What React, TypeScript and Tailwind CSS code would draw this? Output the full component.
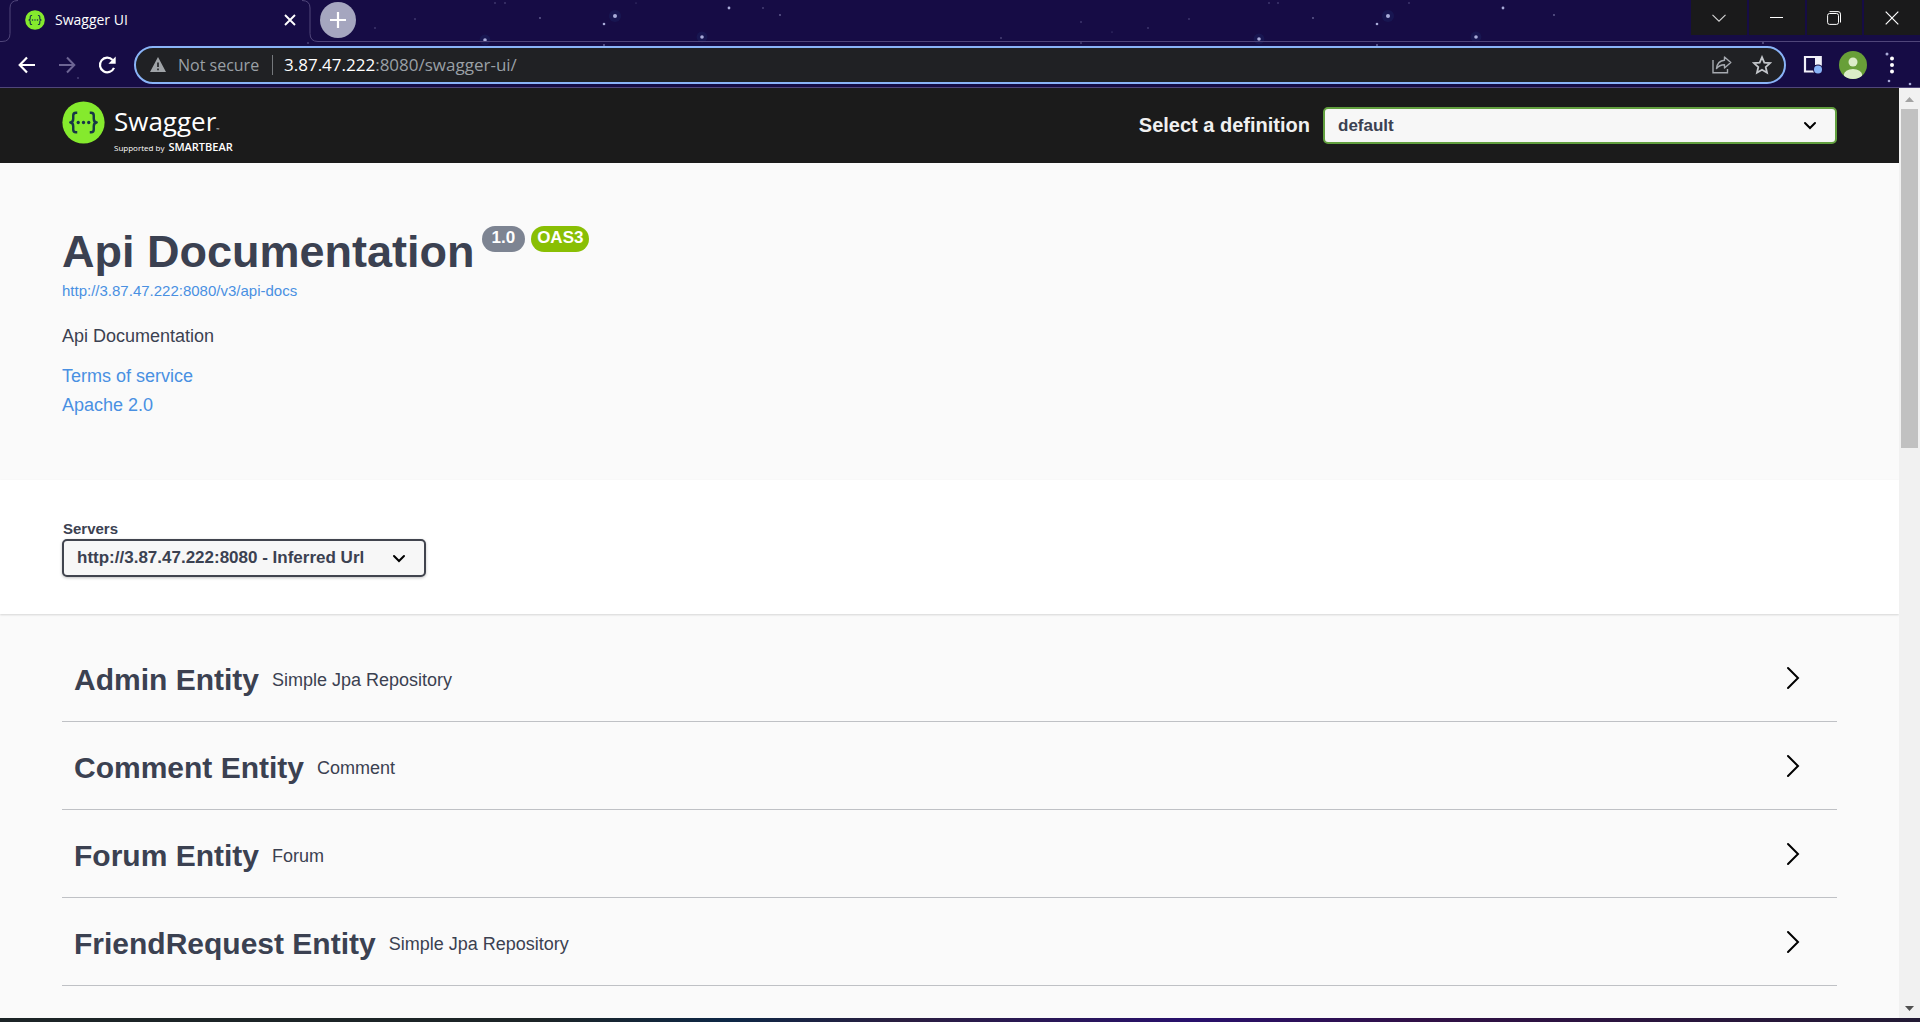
import React from "react";

const stars: [number, number, number][] = [
  [615, 16, 2], [604, 24, 1.3], [702, 37, 1.8], [729, 8, 1.4], [763, 8, 0.8], [780, 15, 0.9],
  [1081, 22, 0.7], [1081, 43, 0.8], [1189, 19, 0.7], [1148, 28, 0.7], [1112, 32, 0.5], [1001, 38, 0.8],
  [1259, 39, 1.8], [1269, 3, 0.7], [1278, 3, 0.7], [1313, 18, 0.9], [1388, 16, 2], [1377, 24, 1.3],
  [1377, 45, 1], [604, 45, 1], [1476, 37, 1.8], [1503, 8, 1.4], [1554, 15, 0.9], [1409, 3, 0.7],
  [636, 3, 0.5], [485, 40, 1.8], [495, 3, 0.7], [505, 3, 0.7], [540, 18, 0.9], [415, 19, 0.7],
  [375, 28, 0.7], [308, 43, 0.8], [78, 78, 0.8], [1887, 54, 1.5], [1889, 81, 1.3], [1910, 84, 1.3],
  [1763, 43, 0.9],
];

function Stars() {
  return (
    <svg className="absolute left-0 top-0 h-full w-full" aria-hidden="true">
      {stars.map(([x, y, r], i) => (
        <g key={i}>
          {r > 1.5 && <circle cx={x} cy={y} r={r * 3} fill="#1f4a8c" opacity="0.18" />}
          <circle cx={x} cy={y} r={r} fill="#b9bce8" opacity={r > 1 ? 0.9 : 0.5} />
        </g>
      ))}
    </svg>
  );
}

function SwaggerMark({ className }: { className: string }) {
  return (
    <svg viewBox="0 0 44 44" className={className} aria-hidden="true">
      <circle cx="22" cy="22" r="21.6" fill="#85ea2d" />
      <g fill="none" stroke="#173647" strokeWidth="2.5" strokeLinejoin="round">
        <path d="M15.6 12h-1.4q-2.7 0-2.7 2.9v3.3q0 3.6-3 3.8 3 .2 3 3.8v3.3q0 2.9 2.7 2.9h1.4" />
        <path d="M28.4 12h1.4q2.7 0 2.7 2.9v3.3q0 3.6 3 3.8-3 .2-3 3.8v3.3q0 2.9-2.7 2.9h-1.4" />
      </g>
      <g fill="#173647">
        <circle cx="16.6" cy="22" r="1.7" />
        <circle cx="22" cy="22" r="1.7" />
        <circle cx="27.4" cy="22" r="1.7" />
      </g>
    </svg>
  );
}

function TabStrip() {
  return (
    <div className="relative flex h-[42px] items-stretch">
      <svg viewBox="0 0 18 42" className="h-[42px] w-[18px]" fill="none" stroke="#50467a" aria-hidden="true">
        <path d="M0 41.500h2q8 0 8-8V8q0-7.500 8-7.500" />
      </svg>
      <div className="flex w-[284px] items-center pb-[2px] pl-[7px] pr-[4px]">
        <SwaggerMark className="size-[20px]" />
        <span className="ml-[10px] flex-1 font-['Open_Sans',sans-serif] text-[14px] leading-5 text-white">Swagger UI</span>
        <button aria-label="Close tab" className="flex size-4 items-center justify-center">
          <svg viewBox="0 0 12 12" className="size-3" stroke="#fff" strokeWidth="1.9">
            <path d="M1 1l10 10M11 1L1 11" />
          </svg>
        </button>
      </div>
      <svg viewBox="0 0 16 42" className="h-[42px] w-4" fill="none" stroke="#50467a" aria-hidden="true">
        <path d="M0 .5q8 0 8 7.500v25.500q0 8 8 8" />
      </svg>
      <div className="flex flex-1 items-start border-b border-[#50467a] pl-[2px] pt-[2px]">
        <button aria-label="New tab" className="flex size-[36px] items-center justify-center rounded-full bg-[#a5a6bf]">
          <svg viewBox="0 0 16 16" className="size-4" stroke="#fff" strokeWidth="2.2">
            <path d="M8 0v16M0 8h16" />
          </svg>
        </button>
      </div>
      <div className="flex w-[229px] gap-[2px] border-b border-[#50467a] pb-[6px]">
        <button aria-label="Search tabs" className="flex flex-1 items-center justify-center bg-[#1a1a1b]">
          <svg viewBox="0 0 14 8" className="h-2 w-[14px]" fill="none" stroke="#d5d5d5" strokeWidth="1.1">
            <path d="M.5 .8L7 7.2 13.500 .8" />
          </svg>
        </button>
        <button aria-label="Minimize" className="flex flex-1 items-center justify-center bg-[#1a1a1b]">
          <span className="h-px w-[13px] bg-white" />
        </button>
        <button aria-label="Restore" className="flex flex-1 items-center justify-center bg-[#1a1a1b]">
          <svg viewBox="0 0 14 14" className="size-[14px]" fill="none" stroke="#fff" strokeWidth="1">
            <rect x=".6" y="2.500" width="10.900" height="10.900" rx="2" />
            <path d="M2.500 .6h8.500q2.500 0 2.500 2.500V11.500" />
          </svg>
        </button>
        <button aria-label="Close window" className="flex flex-1 items-center justify-center bg-[#1a1a1b]">
          <svg viewBox="0 0 14 14" className="size-[14px]" stroke="#fff" strokeWidth="1.2">
            <path d="M.7 .7l12.600 12.600M13.300 .7L.7 13.300" />
          </svg>
        </button>
      </div>
    </div>
  );
}

function Toolbar() {
  return (
    <div className="relative flex h-[46px] items-center border-b border-[#50467a]">
      <div className="flex w-[134px] items-center gap-[20px] pl-[17px]">
        <button aria-label="Back" className="size-[20px]">
          <svg viewBox="0 0 20 20" className="size-5" fill="none" stroke="#fff" strokeWidth="2.200">
            <path d="M18 10H3M10 2.500L2.700 10l7.300 7.500" />
          </svg>
        </button>
        <button aria-label="Forward" className="size-[20px]">
          <svg viewBox="0 0 20 20" className="size-5" fill="none" stroke="#6d6594" strokeWidth="2">
            <path d="M2 10h15M10 2.500l7.300 7.500-7.300 7.500" />
          </svg>
        </button>
        <button aria-label="Reload" className="size-[20px]">
          <svg viewBox="0 0 20 20" className="size-5" fill="none" stroke="#fff" strokeWidth="2.200">
            <path d="M17 12.800A7.300 7.300 0 1 1 15.600 5" />
            <path d="M18.700 1.500v7.300h-7.300z" fill="#fff" stroke="none" />
          </svg>
        </button>
      </div>
      <div className="flex h-[38px] flex-1 items-center rounded-full border-2 border-[#8ab4f8] bg-[#202124] pl-[14px] pr-[12px] font-['Open_Sans',sans-serif] text-[17px] leading-6">
        <svg viewBox="0 0 16 15" className="h-[15px] w-4" aria-hidden="true">
          <path d="M8 0l8 15H0z" fill="#a0a4a8" />
          <path d="M8 5.500v4.500M8 11.500v1.700" stroke="#202124" strokeWidth="1.600" />
        </svg>
        <span className="ml-[12px] w-[86px] whitespace-nowrap text-[16px] text-[#9aa0a6]">Not secure</span>
        <span className="ml-[8px] h-5 w-px bg-[#75787c]" />
        <div role="textbox" aria-label="Address" className="ml-[11px] flex-1 text-[#9aa0a6]">
          <span className="text-white">3.87.47.222</span>:8080/swagger-ui/
        </div>
        <button aria-label="Share this page" className="mr-[20px]">
          <svg viewBox="0 0 20 18" className="h-[18px] w-5" fill="none" stroke="#a6aab0" strokeWidth="1.400">
            <path d="M1 4v12.800h14.500V13" />
            <path d="M12.500 1l6.300 5.500-6.300 5.500V8.700C9 8.700 6.500 9.800 4.500 12.500 5 8 8 4.600 12.500 4.200z" strokeLinejoin="round" />
          </svg>
        </button>
        <button aria-label="Bookmark this tab">
          <svg viewBox="0 0 20 20" className="size-5" fill="none" stroke="#c3c6ca" strokeWidth="1.800">
            <path d="M10 2.200l2.300 5.400 5.800.5-4.400 3.900 1.300 5.700-5-3-5 3L6.300 12 1.900 8.100l5.800-.5z" />
          </svg>
        </button>
      </div>
      <div className="flex w-[134px] items-center pl-[17px] pr-[22px]">
        <button aria-label="Side panel">
          <svg viewBox="0 0 20 19" className="h-[19px] w-5">
            <path d="M2 2h15.500v14.500H2z" fill="none" stroke="#f1f0f8" strokeWidth="2.200" />
            <path d="M12 1h6.600v9H12z" fill="#f1f0f8" />
            <circle cx="15" cy="14.500" r="5" fill="#150b43" />
            <circle cx="15" cy="14.500" r="4" fill="#8ab4f8" />
          </svg>
        </button>
        <button aria-label="Profile" className="ml-[16px]">
          <svg viewBox="0 0 28 28" className="size-7">
            <clipPath id="avatar"><circle cx="14" cy="14" r="14" /></clipPath>
            <g clipPath="url(#avatar)">
              <rect width="28" height="28" fill="#689f38" />
              <circle cx="14" cy="11" r="4.500" fill="#dcedc8" />
              <ellipse cx="14" cy="24" rx="9.200" ry="6" fill="#dcedc8" />
            </g>
          </svg>
        </button>
        <button aria-label="Menu" className="ml-[22px]">
          <svg viewBox="0 0 6 18" className="h-[18px] w-[6px]" fill="#fff">
            <circle cx="3" cy="2.500" r="2" />
            <circle cx="3" cy="9" r="2" />
            <circle cx="3" cy="15.500" r="2" />
          </svg>
        </button>
      </div>
    </div>
  );
}

function SelectArrow({ className }: { className: string }) {
  return (
    <svg viewBox="0 0 14 9" className={className} fill="none" stroke="#000" strokeWidth="2" strokeLinecap="round" aria-hidden="true">
      <path d="M2 2l5 5 5-5" />
    </svg>
  );
}

function Topbar() {
  return (
    <div className="flex h-[75px] items-center bg-[#1b1b1b] px-[62px]">
      <a href="#" aria-label="Swagger, supported by SmartBear" className="flex flex-1 items-start self-start pt-[13px] text-white">
        <SwaggerMark className="size-[43px]" />
        <span className="ml-[9px] mt-[3px] block font-['Open_Sans',sans-serif]">
          <span className="flex items-baseline text-[26px] leading-[34px]">
            Swagger<span className="text-[4px] leading-none">™</span>
          </span>
          <span className="mt-[3px] flex items-baseline gap-[4px] leading-3">
            <span className="text-[8px]">Supported by</span>
            <span className="text-[11px] font-semibold">SMARTBEAR</span>
          </span>
        </span>
      </a>
      <label htmlFor="definition" className="pb-[2px] text-[20px] font-bold leading-6 text-[#f0f0f0]">Select a definition</label>
      <div className="relative ml-[13px] w-[514px]">
        <select id="definition" className="block h-[37px] w-full appearance-none rounded-[5px] border-2 border-[#62a03f] bg-[#f7f7f7] pl-[13px] text-[17px] font-bold leading-5 text-[#3b4151]">
          <option>default</option>
        </select>
        <SelectArrow className="pointer-events-none absolute right-[20px] top-[14px] h-[9px] w-[14px]" />
      </div>
    </div>
  );
}

function Info() {
  return (
    <section className="px-[62px] pb-[63px] pt-[63px] text-[#3b4151]">
      <div className="flex items-start">
        <h1 className="text-[45px] font-bold leading-[52px]">Api Documentation</h1>
        <span className="ml-[7px] rounded-full bg-[#7d8492] px-[10px] pb-[4px] pt-[2px] text-[17px] font-bold leading-5 text-white">1.0</span>
        <span className="ml-[6px] rounded-full bg-[#89bf04] px-[6px] pb-[4px] pt-[2px] text-[17px] font-bold leading-5 text-white">OAS3</span>
      </div>
      <a href="#api-docs" className="mt-[3px] block w-fit text-[15px] leading-5 text-[#4990e2]">http://3.87.47.222:8080/v3/api-docs</a>
      <p className="mt-[23px] text-[18px] leading-6">Api Documentation</p>
      <a href="#terms" className="mt-[16px] block w-fit text-[18px] leading-6 text-[#4990e2]">Terms of service</a>
      <a href="#license" className="mt-[5px] block w-fit text-[18px] leading-6 text-[#4990e2]">Apache 2.0</a>
    </section>
  );
}

function Servers() {
  return (
    <section className="bg-white px-[62px] pb-[37px] pt-[40px] text-[#3b4151] shadow-[0_1px_2px_rgba(0,0,0,0.15)]">
      <label htmlFor="servers" className="block pl-px text-[15px] font-bold leading-[18px]">Servers</label>
      <div className="relative mt-px w-[364px]">
        <select id="servers" className="block h-[38px] w-full appearance-none rounded-[5px] border-2 border-[#41444e] bg-[#f7f7f7] pl-[13px] text-[17px] font-bold leading-5 shadow-[0_1px_3px_rgba(0,0,0,0.25)]">
          <option>http://3.87.47.222:8080 - Inferred Url</option>
        </select>
        <SelectArrow className="pointer-events-none absolute right-[20px] top-[15px] h-[9px] w-[14px]" />
      </div>
    </section>
  );
}

const entities = [
  ["Admin Entity", "Simple Jpa Repository"],
  ["Comment Entity", "Comment"],
  ["Forum Entity", "Forum"],
  ["FriendRequest Entity", "Simple Jpa Repository"],
];

function Entities() {
  return (
    <section className="px-[62px] pt-[25px] text-[#3b4151]">
      {entities.map(([name, description]) => (
        <div key={name} className="mb-[5px] flex h-[83px] items-center border-b border-[#bfc1c5] pl-[12px] pr-[37px]">
          <h2 className="text-[30px] font-bold leading-9">{name}</h2>
          <p className="ml-[13px] flex-1 text-[18px] leading-6">{description}</p>
          <button aria-label={"Expand " + name} className="pb-[4px]">
            <svg viewBox="0 0 14 24" className="h-6 w-[14px]" fill="none" stroke="#000" strokeWidth="2" strokeLinecap="round">
              <path d="M2 2l10 10L2 22" />
            </svg>
          </button>
        </div>
      ))}
    </section>
  );
}

function Scrollbar() {
  return (
    <div className="flex w-[21px] flex-col items-center bg-[#f1f1f1]" aria-hidden="true">
      <svg viewBox="0 0 21 21" className="size-[21px]"><path d="M6 14l4.500-5 4.500 5z" fill="#a3a3a3" /></svg>
      <div className="h-[339px] w-[17px] bg-[#c1c1c1]" />
      <svg viewBox="0 0 21 21" className="mt-auto size-[21px]"><path d="M6 9l4.500 5 4.500-5z" fill="#505050" /></svg>
    </div>
  );
}

export default function App() {
  return (
    <div className="flex h-screen flex-col overflow-hidden font-['Liberation_Sans',Arial,sans-serif]">
      <header className="relative shrink-0 bg-[#160c45]">
        <Stars />
        <TabStrip />
        <Toolbar />
      </header>
      <div className="flex min-h-0 flex-1">
        <main className="min-w-0 flex-1 overflow-hidden bg-[#fafafa]">
          <Topbar />
          <Info />
          <Servers />
          <Entities />
        </main>
        <Scrollbar />
      </div>
      <div className="h-1 shrink-0 bg-[linear-gradient(to_right,#1c2426_0%,#1c2426_28%,#0d2746_38%,#2a1e40_47%,#28106c_62%,#301046_74%,#221a34_100%)]" />
    </div>
  );
}
